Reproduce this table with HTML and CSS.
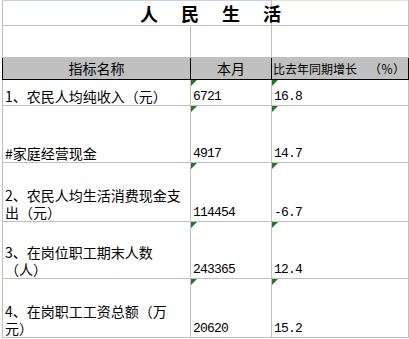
FILE: index.html
```html
<!DOCTYPE html>
<html lang="zh-CN">
<head>
<meta charset="utf-8">
<title>人民生活</title>
<link rel="stylesheet" href="styles.css">
</head>
<body>
<table class="sheet">
  <colgroup><col class="c1"><col class="c2"><col class="c3"></colgroup>
  <tr class="r-title">
    <td colspan="2" class="title-cell"><span class="title">人民生活</span></td>
    <td class="title-side"></td>
  </tr>
  <tr class="r-blank"><td></td><td></td><td></td></tr>
  <tr class="r-head">
    <th class="hc">指标名称</th>
    <th class="hc">本月</th>
    <th class="h3">比去年同期增长<span class="pct">（％）</span></th>
  </tr>
  <tr class="r1">
    <td>1、农民人均纯收入（元）</td>
    <td class="mark"><span class="num">6721</span></td>
    <td class="mark"><span class="num">16.8</span></td>
  </tr>
  <tr class="r2">
    <td>#家庭经营现金</td>
    <td class="mark"><span class="num">4917</span></td>
    <td class="mark"><span class="num">14.7</span></td>
  </tr>
  <tr class="r3">
    <td>2、农民人均生活消费现金支出（元）</td>
    <td class="mark"><span class="num">114454</span></td>
    <td class="mark"><span class="num">-6.7</span></td>
  </tr>
  <tr class="r4">
    <td>3、在岗位职工期末人数（人）</td>
    <td class="mark"><span class="num">243365</span></td>
    <td class="mark"><span class="num">12.4</span></td>
  </tr>
  <tr class="r5">
    <td>4、在岗职工工资总额（万元）</td>
    <td class="mark"><span class="num">20620</span></td>
    <td class="mark"><span class="num">15.2</span></td>
  </tr>
</table>
</body>
</html>
```
FILE: styles.css
```css
html, body {
  margin: 0;
  padding: 0;
  background: #ffffff;
}

body {
  font-family: "Noto Sans CJK SC", sans-serif;
  font-size: 14px;
  color: #000000;
  text-spacing-trim: space-all;
  font-feature-settings: "palt" 0, "halt" 0;
}

.sheet {
  border-collapse: collapse;
  table-layout: fixed;
  width: 406px;
  margin-left: 2px;
}

col.c1 { width: 188px; }
col.c2 { width: 81px; }
col.c3 { width: 137px; }

.sheet td,
.sheet th {
  border: 1px solid #c0c0c0;
  padding: 0 2px 0 2px;
  vertical-align: bottom;
  text-align: left;
  font-weight: normal;
  line-height: 17px;
}

.sheet td:first-child { padding-right: 6px; }

.r-title td { height: 24px; vertical-align: middle; }
.r-title .title-cell { border-top-color: #c4d0e4; white-space: nowrap; padding-left: 137px; }
.r-title .title-side { border-top-color: #e6e2cc; }

.title {
  font-size: 18px;
  font-weight: 700;
  letter-spacing: 23px;
  line-height: 20px;
}

.r-blank td { height: 31px; }

.r-head th {
  height: 21px;
  background: #c0c0c0;
  border: 1px solid #000000;
  white-space: nowrap;
  vertical-align: middle;
}
.r-head .hc { text-align: center; }
.r-head .h3 { font-size: 12px; padding-left: 1px; }
.r-head .pct { margin-left: 12px; }

.r1 td { height: 25px; }
.r2 td { height: 56px; }
.r3 td { height: 58px; }
.r4 td { height: 56px; }
.r5 td { height: 58px; }

.mark { position: relative; }
.mark::before {
  content: "";
  position: absolute;
  left: 0;
  top: 0;
  width: 0;
  height: 0;
  border-top: 6px solid #1e7a1e;
  border-right: 6px solid transparent;
}

.num {
  font-family: "Liberation Mono", monospace;
  font-size: 13px;
  letter-spacing: -0.8px;
}
```
